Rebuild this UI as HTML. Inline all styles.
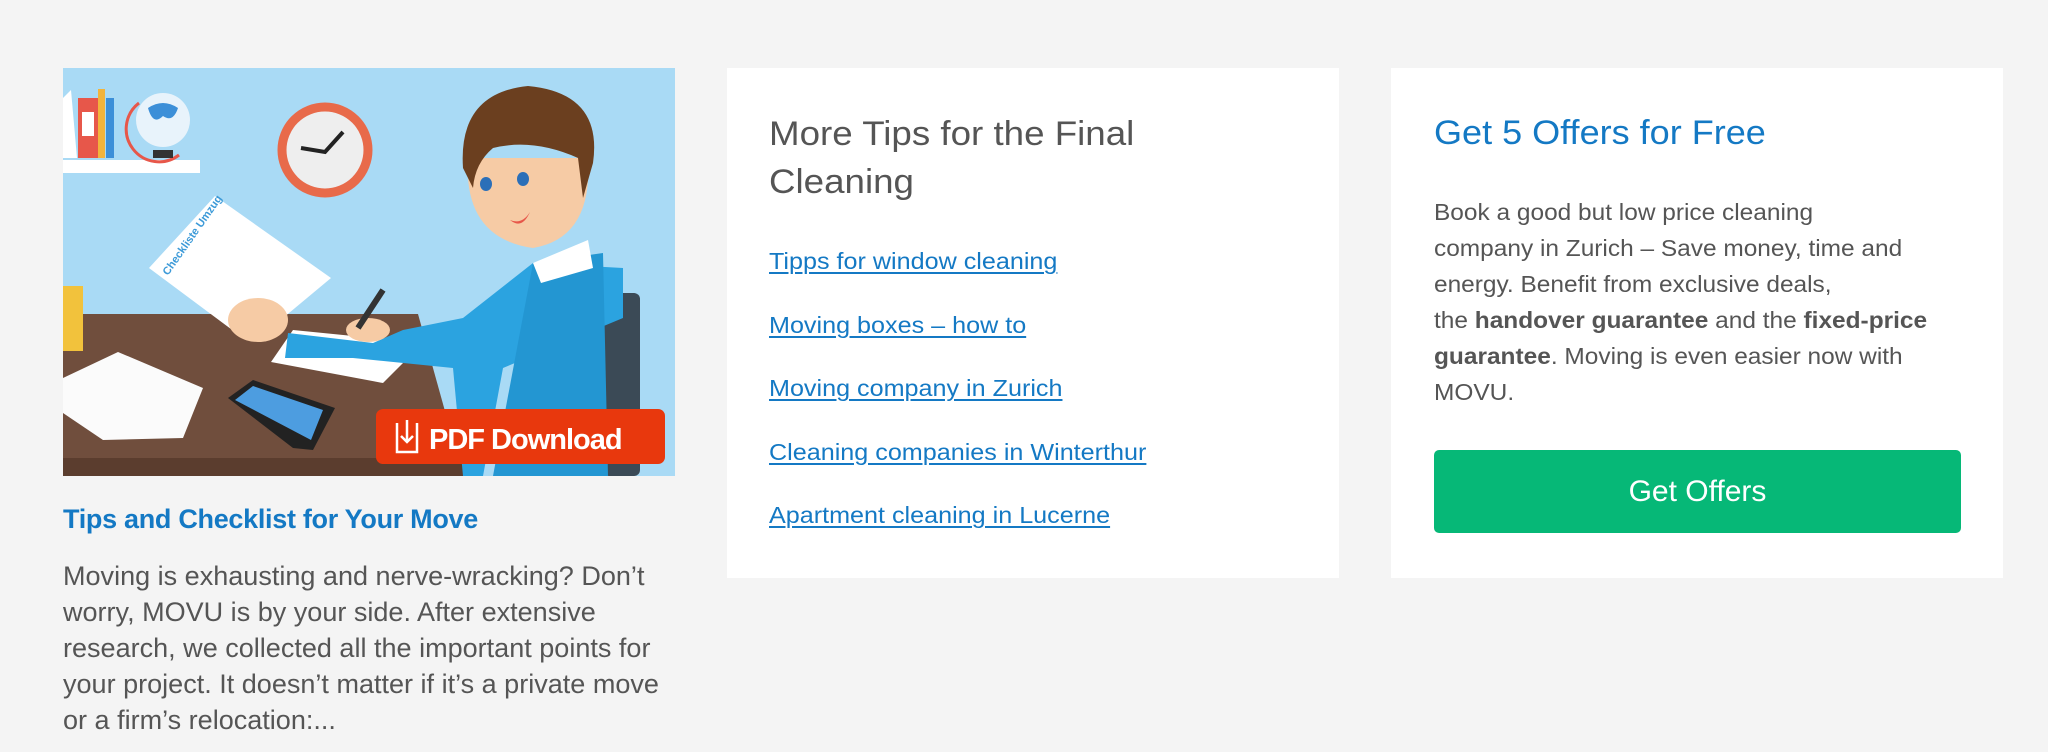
<!DOCTYPE html>
<html><head><meta charset="utf-8"><style>
*{margin:0;padding:0;box-sizing:border-box}
body{width:2048px;height:752px;background:#f4f4f4;font-family:"Liberation Sans",sans-serif;position:relative;overflow:hidden;color:#555}
.abs{position:absolute;white-space:nowrap}
.sx{transform:scaleX(1.04);transform-origin:0 0}
.card{position:absolute;background:#fff;top:68px;height:510px;width:612px}
.p{font-size:23.5px;line-height:36px;color:#555}
a{color:#1479c4;text-decoration:underline;text-underline-offset:3px;text-decoration-thickness:1.5px}
h2{font-weight:normal;font-size:34px;line-height:48px}
</style></head><body>
<svg class="abs" style="left:63px;top:68px" width="612" height="408" viewBox="0 0 612 408">
<rect width="612" height="408" fill="#a9daf5"/>
<rect x="0" y="92" width="137" height="13" fill="#fff"/>
<polygon points="0,30 8,22 14,90 0,90" fill="#fff"/>
<rect x="15" y="30" width="20" height="60" fill="#e7574a"/>
<rect x="19" y="44" width="12" height="24" fill="#fff"/>
<rect x="35" y="21" width="7" height="69" fill="#f2b43c"/>
<rect x="43" y="30" width="8" height="60" fill="#3c8fd8"/>
<circle cx="100" cy="52" r="27" fill="#e8f3fb"/>
<path d="M85 40 q15 -10 30 0 q-5 15 -15 8 q-10 10 -15 -8z" fill="#3c8fd8"/>
<path d="M76 35 a30 30 0 0 0 40 52" stroke="#e7574a" stroke-width="3" fill="none"/>
<rect x="90" y="82" width="20" height="8" fill="#333"/>
<circle cx="262" cy="82" r="43" fill="#eee" stroke="#e86a4a" stroke-width="9"/>
<path d="M238 80 L262 84 L280 64" stroke="#222" stroke-width="4" fill="none"/>
<polygon points="0,246 355,246 400,408 0,408" fill="#704e3d"/>
<rect x="0" y="390" width="410" height="18" fill="#5b3d2e"/>
<rect x="0" y="218" width="20" height="65" fill="#f2c23c"/>
<polygon points="0,310 55,284 140,320 120,370 40,372 0,345" fill="#fbfbfb"/>
<polygon points="165,330 190,312 272,340 250,382 230,380" fill="#222"/>
<polygon points="172,332 190,318 260,342 248,372" fill="#4d9de0"/>
<polygon points="86,200 152,128 268,210 220,250 180,270" fill="#fff"/>
<text x="105" y="208" transform="rotate(-55 105 208)" font-size="11" font-weight="bold" fill="#3c9ad8">Checkliste Umzug</text>
<polygon points="208,294 230,262 360,275 320,315" fill="#fff"/>
<rect x="540" y="225" width="37" height="183" rx="6" fill="#3b4a56"/>
<polygon points="420,408 440,300 560,250 560,200 470,195 400,250 340,262 310,275 225,265 222,290 290,290 390,300 400,408" fill="#2ba3e0"/>
<polygon points="470,195 540,185 545,408 430,408" fill="#2396d2"/>
<polygon points="470,195 525,172 530,200 478,215" fill="#fff"/>
<ellipse cx="195" cy="252" rx="30" ry="22" fill="#f6cba5"/>
<ellipse cx="305" cy="262" rx="22" ry="12" fill="#f6cba5"/>
<line x1="295" y1="260" x2="320" y2="222" stroke="#333" stroke-width="6"/>
<path d="M405 90 Q400 170 470 180 Q530 170 525 90 Z" fill="#f6cba5"/>
<path d="M400 100 Q395 25 465 18 Q540 25 530 95 L520 130 L515 90 Q470 70 430 80 Q412 95 410 120Z" fill="#6b3f1f"/>
<ellipse cx="423" cy="116" rx="6" ry="7" fill="#2b6fb8"/>
<ellipse cx="460" cy="111" rx="6" ry="7" fill="#2b6fb8"/>
<path d="M447 152 q12 5 20 -8 q-8 18 -20 8z" fill="#e7574a"/>
<rect x="313" y="341" width="289" height="55" rx="7" fill="#e8380d"/>
<path d="M334 355 v29 h20 v-29 M344 352 v22 M338 368 l6 6 l6 -6" stroke="#fff" stroke-width="2.5" fill="none"/>
<text x="366" y="381" font-size="29" font-weight="bold" fill="#fff" font-family="Liberation Sans,sans-serif" letter-spacing="-1">PDF Download</text>
</svg>
<div class="abs" style="left:63px;top:504px;font-size:27px;font-weight:bold;color:#1479c4;letter-spacing:-0.3px">Tips and Checklist for Your Move</div>
<div class="abs p sx" style="left:63px;top:558px;font-size:26.5px;transform:scaleX(1.02)">Moving is exhausting and nerve-wracking? Don’t<br>worry, MOVU is by your side. After extensive<br>research, we collected all the important points for<br>your project. It doesn’t matter if it’s a private move<br>or a firm’s relocation:...</div>

<div class="card" style="left:727px">
<h2 class="abs sx" style="left:42px;top:42px;color:#555;transform:scaleX(1.08)">More Tips for the Final<br>Cleaning</h2>
<div class="abs p sx" style="left:42px;top:162px;line-height:63.5px;transform:scaleX(1.07)">
<a>Tipps for window cleaning</a><br><a>Moving boxes – how to</a><br><a>Moving company in Zurich</a><br><a>Cleaning companies in Winterthur</a><br><a>Apartment cleaning in Lucerne</a></div>
</div>

<div class="card" style="left:1391px">
<h2 class="abs sx" style="left:43px;top:41px;color:#1479c4;transform:scaleX(1.06)">Get 5 Offers for Free</h2>
<div class="abs p sx" style="left:43px;top:126px">Book a good but low price cleaning<br>company in Zurich – Save money, time and<br>energy. Benefit from exclusive deals,<br>the <b>handover guarantee</b> and the <b>fixed-price</b><br><b>guarantee</b>. Moving is even easier now with<br>MOVU.</div>
<div class="abs" style="left:43px;top:382px;width:527px;height:83px;background:#06b877;border-radius:5px;color:#fff;font-size:30px;line-height:83px;text-align:center">Get Offers</div>
</div>
</body></html>
